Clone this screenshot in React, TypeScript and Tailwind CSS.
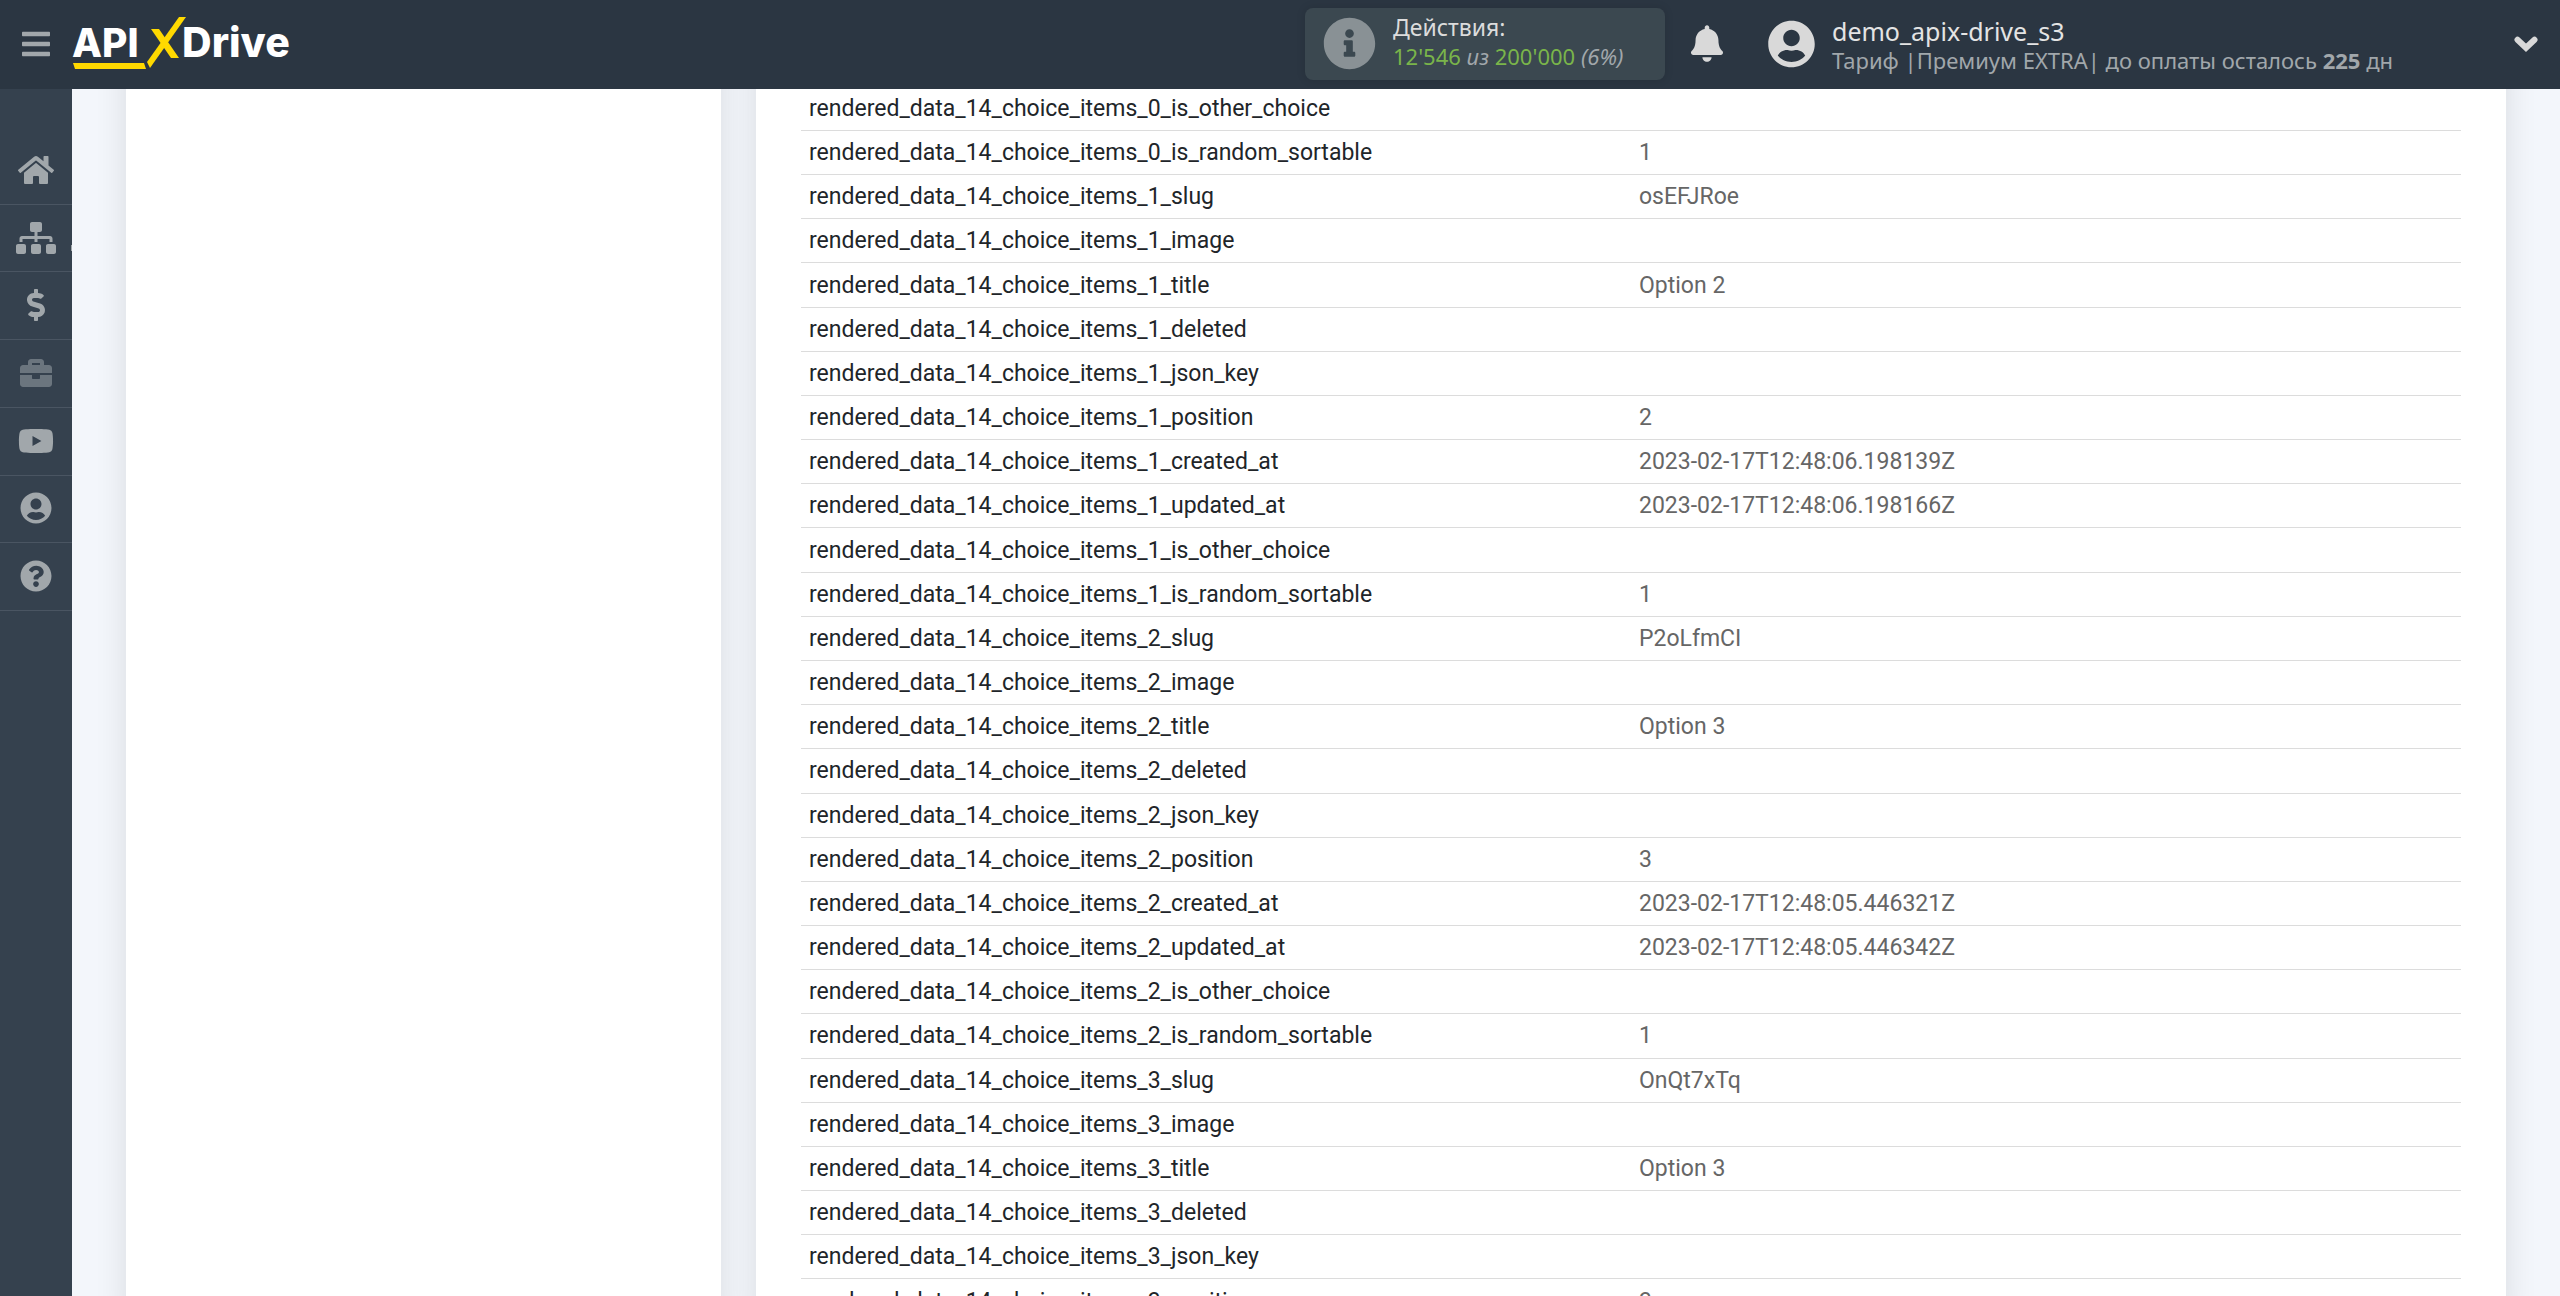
import type { IconType } from "react-icons";
import {
  FaBars,
  FaBell,
  FaBriefcase,
  FaDollarSign,
  FaHome,
  FaInfoCircle,
  FaQuestionCircle,
  FaSitemap,
  FaUserCircle,
  FaYoutube,
} from "react-icons/fa";

interface NavItem {
  label: string;
  icon: IconType;
  size: string;
  muted?: boolean;
  hasMore?: boolean;
}

const navItems: NavItem[] = [
  { label: "Главная", icon: FaHome, size: "w-9 h-8" },
  { label: "Связи", icon: FaSitemap, size: "w-10 h-8", hasMore: true },
  { label: "Оплата", icon: FaDollarSign, size: "w-5 h-8" },
  { label: "Проекты", icon: FaBriefcase, size: "w-8 h-8", muted: true },
  { label: "Видео", icon: FaYoutube, size: "w-9 h-8" },
  { label: "Профиль", icon: FaUserCircle, size: "w-8 h-8" },
  { label: "Помощь", icon: FaQuestionCircle, size: "w-8 h-8" },
];

const PREFIX = "rendered_data_14_choice_items";

const rows: [string, string][] = [
  ["0_is_other_choice", ""],
  ["0_is_random_sortable", "1"],
  ["1_slug", "osEFJRoe"],
  ["1_image", ""],
  ["1_title", "Option 2"],
  ["1_deleted", ""],
  ["1_json_key", ""],
  ["1_position", "2"],
  ["1_created_at", "2023-02-17T12:48:06.198139Z"],
  ["1_updated_at", "2023-02-17T12:48:06.198166Z"],
  ["1_is_other_choice", ""],
  ["1_is_random_sortable", "1"],
  ["2_slug", "P2oLfmCI"],
  ["2_image", ""],
  ["2_title", "Option 3"],
  ["2_deleted", ""],
  ["2_json_key", ""],
  ["2_position", "3"],
  ["2_created_at", "2023-02-17T12:48:05.446321Z"],
  ["2_updated_at", "2023-02-17T12:48:05.446342Z"],
  ["2_is_other_choice", ""],
  ["2_is_random_sortable", "1"],
  ["3_slug", "OnQt7xTq"],
  ["3_image", ""],
  ["3_title", "Option 3"],
  ["3_deleted", ""],
  ["3_json_key", ""],
  ["3_position", "3"],
];

function Logo() {
  return (
    <svg width="224" height="56" viewBox="72 15 224 56" aria-label="ApiX-Drive">
      <g fill="#ffffff" fontWeight="800" className="font-['Inter',sans-serif]">
        <text x="72" y="56" fontSize="39">API</text>
        <text x="182" y="56" fontSize="41">Drive</text>
      </g>
      <g fill="#ffd900">
        <path d="M179 16h7l-36 51-3-6z" />
        <path d="M151 28h8l20 29h-8z" />
        <path d="M73 62h71l2 6H75z" />
      </g>
    </svg>
  );
}

function Header() {
  return (
    <header className="fixed inset-x-0 top-0 z-10 flex h-[89px] items-center bg-[#2b3642] px-[22px] pb-0.5 font-['Noto_Sans',sans-serif]">
      <button type="button" aria-label="Меню" className="text-[#a1a7ab]">
        <FaBars className="h-8 w-7" />
      </button>
      <a href="#" className="ml-[22px] block">
        <Logo />
      </a>

      <div className="ml-auto flex h-[72px] w-[360px] items-center rounded-lg bg-[#3b4850] pl-[18px] shadow-[0_0_10px_rgba(0,0,0,0.12)]">
        <FaInfoCircle className="h-[53px] w-[53px] text-[#899195]" />
        <div className="ml-[17px] pb-1 text-[22px] leading-[29px] text-[#a1a7ab]">
          <div className="text-[23px] text-[#dcdcdc]">Действия:</div>
          <div>
            <span className="text-[#7ab54a]">12'546</span> <i>из</i>{" "}
            <span className="text-[#7ab54a]">200'000</span> <i>(6%)</i>
          </div>
        </div>
      </div>

      <button type="button" aria-label="Уведомления" className="ml-[26px] text-[#d9d9d9]">
        <FaBell className="h-[37px] w-8" />
      </button>

      <button type="button" className="ml-[45px] flex w-[770px] items-center text-left">
        <FaUserCircle className="h-12 w-[47px] text-[#d9d9d9]" />
        <span className="ml-[17px] pt-1 text-[22px] leading-[29px] text-[#a1a7ab]">
          <span className="block text-[25px] leading-[29px] text-[#e4e4e4]">demo_apix-drive_s3</span>
          <span className="block">
            Тариф |Премиум EXTRA| до оплаты осталось <b>225</b> дн
          </span>
        </span>
        <svg width="24" height="16" viewBox="0 0 24 16" className="ml-auto text-[#d9d9d9]">
          <path
            d="M3.5 3.8 12 11.8l8.5-8"
            fill="none"
            stroke="currentColor"
            strokeWidth="6"
            strokeLinecap="round"
          />
        </svg>
      </button>
    </header>
  );
}

function Sidebar() {
  return (
    <nav className="fixed bottom-0 left-0 top-[89px] w-[72px] bg-[#35414e] pt-12">
      <ul className="grid h-[474px] auto-rows-fr">
        {navItems.map(({ label, icon: Icon, size, muted, hasMore }) => (
          <li key={label} className="relative border-b border-[#4a5562]">
            <a
              href="#"
              aria-label={label}
              className={`flex h-full items-center justify-center pb-px ${muted ? "text-[#6b757e]" : "text-[#a1a7ab]"}`}
            >
              <Icon className={size} />
            </a>
            {hasMore && <span className="absolute bottom-5 right-0 h-1.5 w-px bg-[#a1a7ab]" />}
          </li>
        ))}
      </ul>
    </nav>
  );
}

function DataTable() {
  return (
    <table className="h-[1237px] w-full table-fixed border-collapse text-[23px] leading-7">
      <tbody>
        {rows.map(([key, value]) => (
          <tr key={key} className="border-b border-[#dcdcdc]">
            <th scope="row" className="px-2 pt-px text-left font-normal text-[#212529]">
              {PREFIX}_{key}
            </th>
            <td className="px-2 pt-px text-[#666666]">{value}</td>
          </tr>
        ))}
      </tbody>
    </table>
  );
}

export default function App() {
  return (
    <div className="h-screen overflow-hidden bg-[#f3f6fb] font-['Roboto',sans-serif]">
      <Header />
      <Sidebar />
      <main className="flex gap-[35px] pl-[126px] pr-[54px]">
        <aside className="w-1/4 shrink-0 bg-white shadow-[0_0_30px_rgba(0,0,0,0.11)]" />
        <section className="min-w-0 flex-1 bg-white px-[45px] pt-[87px] shadow-[0_0_30px_rgba(0,0,0,0.11)]">
          <DataTable />
        </section>
      </main>
    </div>
  );
}
